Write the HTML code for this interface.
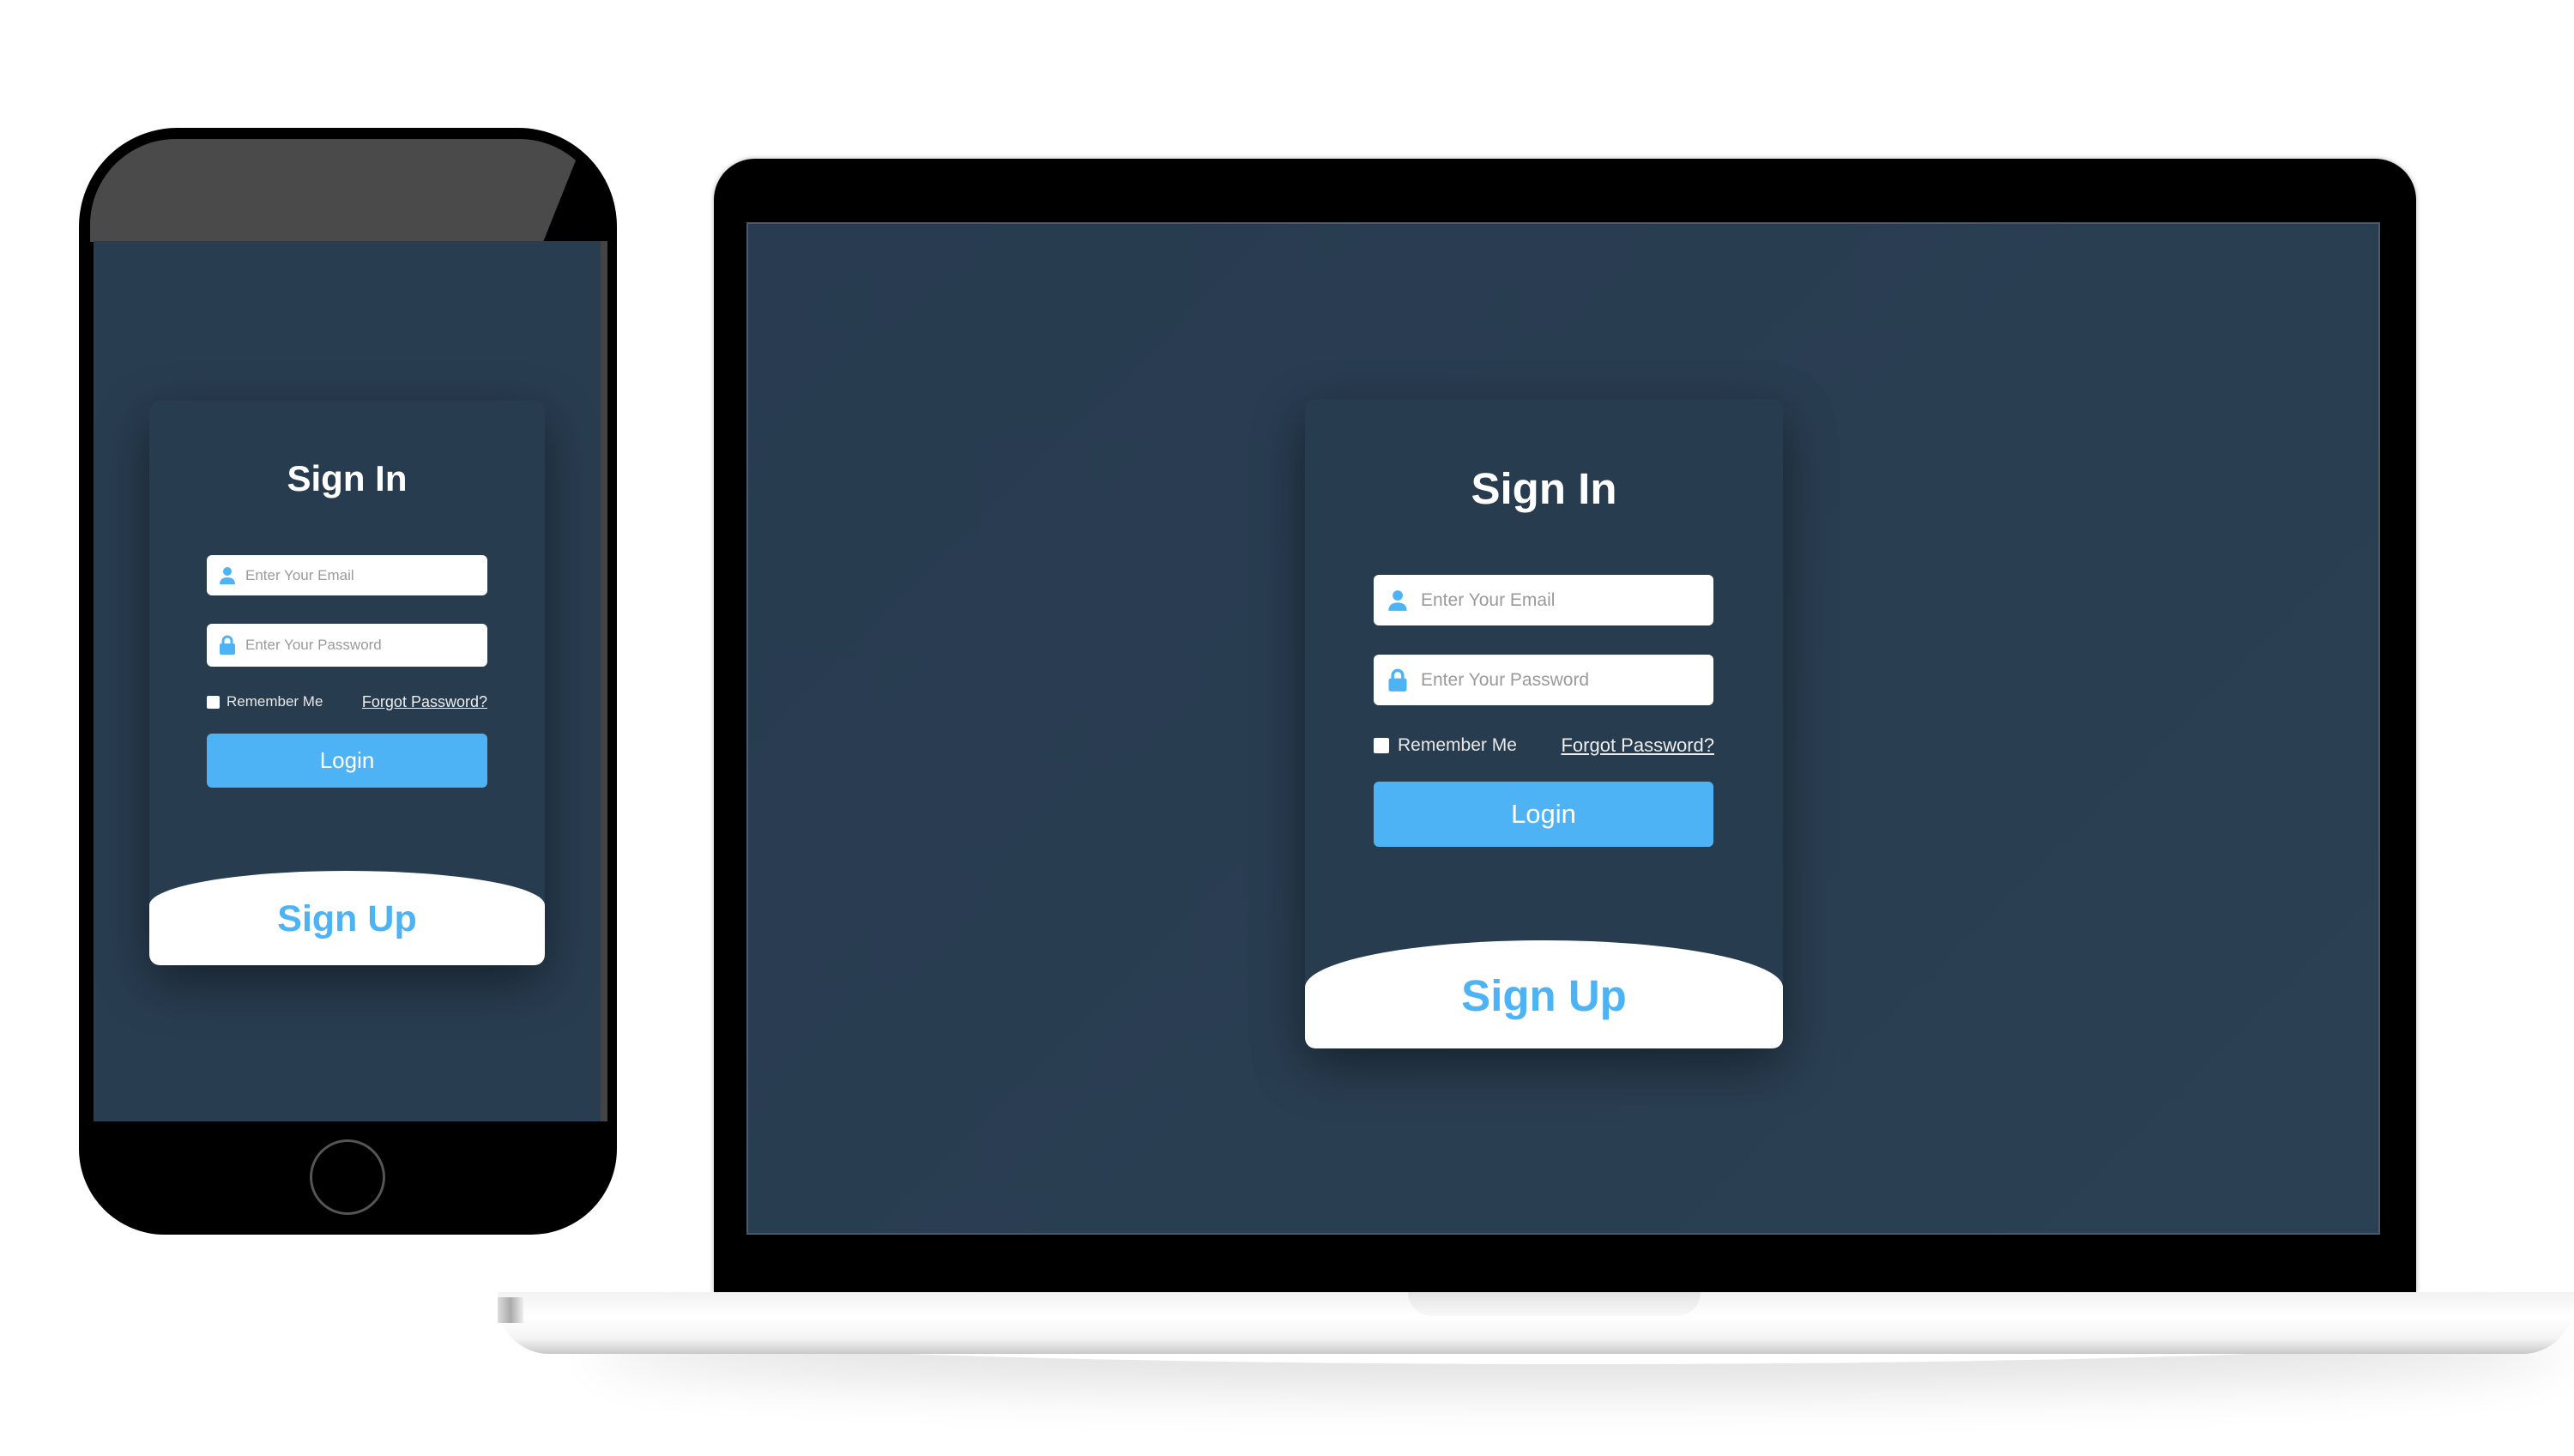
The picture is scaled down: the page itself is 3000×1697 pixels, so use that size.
<!DOCTYPE html>
<html><head><meta charset="utf-8"><style>
*{margin:0;padding:0;box-sizing:border-box}
body{width:3000px;height:1697px;background:#fff;position:relative;overflow:hidden;font-family:"Liberation Sans",Arial,sans-serif}
.a{position:absolute}
.card{position:absolute;background:#283c50;border-radius:12px;box-shadow:0 20px 60px rgba(0,0,0,.45);overflow:hidden}
.title{position:absolute;left:0;right:0;text-align:center;color:#fff;font-weight:bold}
.inp{position:absolute;background:#fff;border-radius:6px;color:#9a9a9a}
.inp span{position:absolute;top:50%;transform:translateY(-50%)}
.inp svg{position:absolute;top:50%;transform:translateY(-50%)}
.rem{position:absolute;color:#e8e8e8;white-space:nowrap}
.cb{display:inline-block;background:#fff;border-radius:2px;vertical-align:middle}
.fp{position:absolute;color:#eee;text-decoration:underline}
.btn{position:absolute;background:#4db3f5;border-radius:6px;color:#fff;text-align:center}
.su{position:absolute;left:0;right:0;bottom:0;background:#fff;color:#4db3f5;font-weight:bold;text-align:center}
</style></head><body>

<!-- PHONE -->
<div class="a" style="left:92px;top:149px;width:627px;height:1290px;background:#000;border-radius:115px 115px 100px 100px"></div>
<div class="a" style="left:105px;top:162px;width:600px;height:120px;background:#4a4a4a;border-radius:100px 100px 0 0;clip-path:polygon(0 0,96% 0,88% 100%,0 100%)"></div>
<div class="a" style="left:109px;top:281px;width:599px;height:1026px;background:#293d51;border-right:8px solid #444"></div>
<div class="a" style="left:361px;top:1328px;width:88px;height:88px;border:3px solid #555;border-radius:50%"></div>

<div class="card" style="left:174px;top:467px;width:461px;height:658px">
  <div class="title" style="top:67px;font-size:42px">Sign In</div>
  <div class="inp" style="left:67px;top:180px;width:327px;height:47px">
    <svg width="20" height="22" style="left:14px" viewBox="0 0 20 22"><circle cx="10" cy="6" r="5" fill="#4db3f5"/><path d="M1 21c0-6 4-8 9-8s9 2 9 8z" fill="#4db3f5"/></svg>
    <span style="left:45px;font-size:17px">Enter Your Email</span></div>
  <div class="inp" style="left:67px;top:260px;width:327px;height:50px">
    <svg width="20" height="24" style="left:14px" viewBox="0 0 20 24"><path d="M5 11V7a5 5 0 0 1 10 0v4" stroke="#4db3f5" stroke-width="3" fill="none"/><rect x="1" y="10" width="18" height="13" rx="2" fill="#4db3f5"/></svg>
    <span style="left:45px;font-size:17px">Enter Your Password</span></div>
  <div class="rem" style="left:67px;top:341px;font-size:17px"><span class="cb" style="width:15px;height:15px;margin-right:8px"></span>Remember Me</div>
  <div class="fp" style="right:67px;top:341px;font-size:18px">Forgot Password?</div>
  <div class="btn" style="left:67px;top:388px;width:327px;height:63px;line-height:63px;font-size:26px">Login</div>
  <div class="su" style="height:110px;border-radius:50% 50% 12px 12px / 40px 40px 12px 12px;font-size:43px;line-height:112px">Sign Up</div>
</div>

<!-- LAPTOP -->
<div class="a" style="left:690px;top:1500px;width:2300px;height:90px;border-radius:50%;box-shadow:0 30px 60px rgba(0,0,0,.12)"></div>
<div class="a" style="left:832px;top:185px;width:1984px;height:1321px;background:#000;border-radius:48px 48px 0 0;box-shadow:0 0 6px rgba(0,0,0,.3)"></div>
<div class="a" style="left:870px;top:259px;width:1904px;height:1180px;background:linear-gradient(135deg,#283b50,#2b4053);border:2px solid #4a5a6a"></div>
<div class="a" style="left:580px;top:1506px;width:2420px;height:72px;background:linear-gradient(#f2f2f2,#fff 40%,#f4f4f4 75%,#c9c9c9);border-radius:0 0 60px 60px"></div>
<div class="a" style="left:580px;top:1512px;width:30px;height:30px;background:linear-gradient(90deg,#ddd,#aaa,#eee)"></div>
<div class="a" style="left:1641px;top:1506px;width:341px;height:28px;background:linear-gradient(#e4e4e4,#f8f8f8);border-radius:0 0 30px 30px"></div>

<div class="card" style="left:1521px;top:465px;width:557px;height:757px">
  <div class="title" style="top:75px;font-size:51px">Sign In</div>
  <div class="inp" style="left:80px;top:205px;width:396px;height:59px">
    <svg width="24" height="26" style="left:16px" viewBox="0 0 20 22"><circle cx="10" cy="6" r="5" fill="#4db3f5"/><path d="M1 21c0-6 4-8 9-8s9 2 9 8z" fill="#4db3f5"/></svg>
    <span style="left:55px;font-size:21px">Enter Your Email</span></div>
  <div class="inp" style="left:80px;top:298px;width:396px;height:59px">
    <svg width="24" height="28" style="left:16px" viewBox="0 0 20 24"><path d="M5 11V7a5 5 0 0 1 10 0v4" stroke="#4db3f5" stroke-width="3" fill="none"/><rect x="1" y="10" width="18" height="13" rx="2" fill="#4db3f5"/></svg>
    <span style="left:55px;font-size:21px">Enter Your Password</span></div>
  <div class="rem" style="left:80px;top:392px;font-size:21px"><span class="cb" style="width:18px;height:18px;margin-right:10px"></span>Remember Me</div>
  <div class="fp" style="right:80px;top:391px;font-size:22px">Forgot Password?</div>
  <div class="btn" style="left:80px;top:446px;width:396px;height:76px;line-height:76px;font-size:31px">Login</div>
  <div class="su" style="height:126px;border-radius:50% 50% 12px 12px / 55px 55px 12px 12px;font-size:51px;line-height:130px">Sign Up</div>
</div>
</body></html>
